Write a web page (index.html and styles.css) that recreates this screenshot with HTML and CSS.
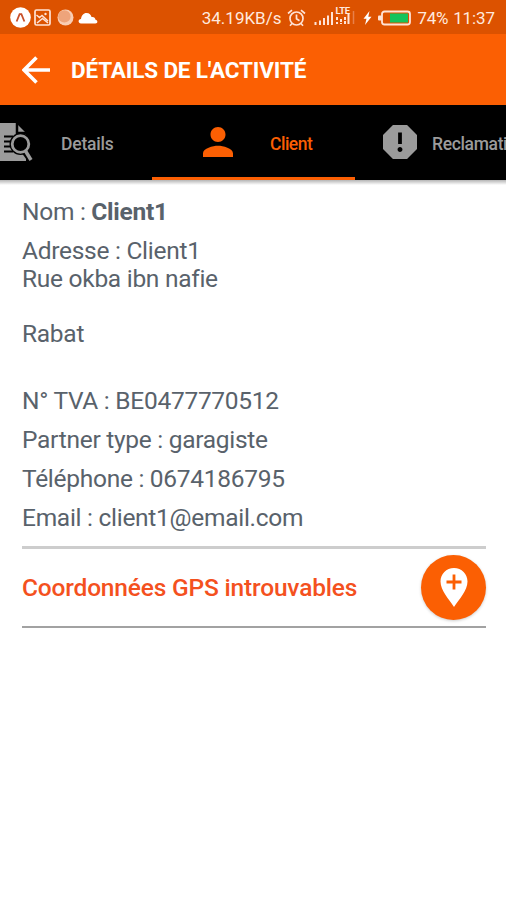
FILE: index.html
```html
<!DOCTYPE html>
<html lang="fr">
<head>
	<meta charset="UTF-8">
	<title>Détails de l'activité</title>
	<link rel="stylesheet" href="styles.css">
</head>
<body>
	<div class="status">
		<div class="notifs">
			<svg class="expo" width="21" height="21" viewBox="0 0 21 21">
				<circle cx="10.5" cy="10.5" r="10.3" fill="#fff"/>
				<path d="M6.6 14.5L9.6 7.2h1.8l3 7.3" fill="none" stroke="#c8502a" stroke-width="1.8"/>
			</svg>
			<svg class="photo" width="17" height="17" viewBox="0 0 17 17">
				<rect x="1" y="1" width="15" height="15" rx="1.5" fill="none" stroke="#ffe3d6" stroke-width="1.7"/>
				<path d="M2.500 6l3 2.500L8 6.500l6 5.500M3 14l5.500-4.500L14 14" fill="none" stroke="#ffe3d6" stroke-width="1.500"/>
				<circle cx="11.5" cy="5" r="1.2" fill="#ffe3d6"/>
			</svg>
			<svg class="moon" width="17" height="17" viewBox="0 0 17 17">
				<circle cx="8.5" cy="8.5" r="8" fill="#f9cdb3"/>
				<circle cx="7.4" cy="7.4" r="6.2" fill="#eea47b"/>
			</svg>
			<svg class="cloud" width="20" height="12" viewBox="0 0 20 12">
				<path d="M3 11.5C-.2 11.5-.2 7.200 3 7 3.500 3.500 5.500 1 8.500 1s4.500 1.700 5 4c2.500-.4 3.700.8 4 2.800 2.400.3 2.600 3.700-.2 3.700z" fill="#fff"/>
			</svg>
		</div>
		<div class="system">
			<span class="speed">34.19KB/s</span>
			<svg class="alarm" width="19" height="18" viewBox="0 0 19 18">
				<g fill="none" stroke="#ffe3d6" stroke-width="1.7">
					<circle cx="9.500" cy="9.500" r="6.500"/>
					<path d="M9.500 5.500v4.300l3 2M1 4.500l4-3.300M18 4.500l-4-3.300M5 14.500l-2 2.200M14 14.500l2 2.200"/>
				</g>
			</svg>
			<svg class="signal" width="19" height="14" viewBox="0 0 19 14">
				<path d="M1.500 14v-3M6 14v-4.500M10 14v-7M14 14v-9.500M18 14v-13" stroke="#ffe3d6" stroke-width="2"/>
			</svg>
			<div class="lte">
				<span class="lte-label">LTE</span>
				<svg width="20" height="20" viewBox="0 0 20 20">
					<path d="M2 12v3M6 14v3M2 17v2M6 18v1M10 12v3M10 16v3M13.500 9v10" stroke="#ffe3d6" stroke-width="2"/>
					<path d="M18.500 6v13" stroke="#e8804a" stroke-width="1.500"/>
				</svg>
			</div>
			<svg class="bolt" width="9" height="14" viewBox="0 0 9 14">
				<path d="M6.500 0L.5 7.800h3L2 14l6.500-8.300H5.300z" fill="#fff"/>
			</svg>
			<svg class="battery" width="34" height="16" viewBox="0 0 34 16">
				<rect x="1" y="5.500" width="4" height="5" rx="1" fill="#ffe3d6"/>
				<rect x="5" y="1.500" width="28" height="13" rx="2.500" fill="none" stroke="#ffe3d6" stroke-width="1.800"/>
				<rect x="13" y="3.500" width="18" height="9" fill="#14c35c"/>
			</svg>
			<span class="percent">74%</span>
			<span class="time">11:37</span>
		</div>
	</div>

	<div class="header">
		<svg class="back" width="29" height="28" viewBox="0 0 29 28">
			<path d="M28 14H2.500M14.500 1.500L2 14l12.500 12.500" fill="none" stroke="#fff" stroke-width="3.600"/>
		</svg>
		<h1 class="title">DÉTAILS DE L'ACTIVITÉ</h1>
	</div>

	<div class="tabs">
		<div class="tab tab-details">
			<svg width="33" height="40" viewBox="0 0 33 40">
				<path d="M0 1h16l10 10v28H0z" fill="#9b9b9b"/>
				<path d="M17 1v10h10" fill="none" stroke="#000" stroke-width="2.500"/>
				<path d="M4 14.500h9M4 19.500h7M4 24.500h7M4 29.500h9" stroke="#000" stroke-width="1.800"/>
				<circle cx="20.500" cy="22" r="11" fill="#000"/>
				<path d="M24 29l8 11" stroke="#000" stroke-width="6"/>
				<circle cx="20.500" cy="22" r="8.300" fill="none" stroke="#9b9b9b" stroke-width="2.800"/>
				<path d="M25.500 29l5.500 9" stroke="#9b9b9b" stroke-width="3.500"/>
			</svg>
			<span class="label">Details</span>
		</div>
		<div class="tab tab-client on">
			<svg width="30" height="30" viewBox="4 4 16 16">
				<path d="M12 12c2.210 0 4-1.790 4-4s-1.790-4-4-4-4 1.790-4 4 1.790 4 4 4zm0 2c-2.670 0-8 1.340-8 4v2h16v-2c0-2.660-5.330-4-8-4z" fill="#fb5f03"/>
			</svg>
			<span class="label">Client</span>
		</div>
		<div class="tab tab-reclam">
			<svg width="34" height="34" viewBox="3 3 18 18">
				<path d="M15.730 3H8.270L3 8.270v7.460L8.270 21h7.460L21 15.730V8.270L15.730 3zM12 17.300c-.72 0-1.300-.58-1.300-1.300 0-.72.58-1.300 1.300-1.300.72 0 1.300.58 1.300 1.300 0 .72-.58 1.300-1.300 1.300zm1-4.300h-2V7h2v6z" fill="#9b9b9b"/>
			</svg>
			<span class="label">Reclamati</span>
		</div>
	</div>

	<div class="content">
		<p class="row nom">Nom : <b>Client1</b></p>
		<p class="row adresse">Adresse : Client1<br>Rue okba ibn nafie<br><br>Rabat</p>
		<p class="row">N° TVA : BE0477770512</p>
		<p class="row">Partner type : garagiste</p>
		<p class="row">Téléphone : 0674186795</p>
		<p class="row email">Email : client1@email.com</p>
		<div class="gps">
			<span class="gps-text">Coordonnées GPS introuvables</span>
			<a href="#" class="pin">
				<svg width="28" height="39" viewBox="0 0 28 39">
					<path d="M14 0C6.300 0 .5 6 .5 13.500.5 22.500 9 31.500 14 39c5-7.500 13.500-16.500 13.500-25.500C27.500 6 21.700 0 14 0z" fill="#fff"/>
					<path d="M14 6.500v15M6.500 14h15" stroke="#fb5f03" stroke-width="2.800"/>
				</svg>
			</a>
		</div>
	</div>
</body>
</html>
```

FILE: styles.css
```css
* {margin:0; padding:0; box-sizing:border-box;}
body {
	width:506px;
	height:900px;
	overflow:hidden;
	background:#fff;
	font-family:Roboto, "Liberation Sans", sans-serif;
}
svg {
	display:block;
	flex:none;
}

/* status bar */
.status {
	display:flex;
	justify-content:space-between;
	height:34px;
	padding:0 11px 0 10px;
	background:#dc5200;
	color:#ffe9de;
	font-size:17px;
}
.notifs, .system {
	display:flex;
	align-items:center;
	height:35px;
}
.photo {margin-left:3px;}
.moon {margin-left:6px;}
.cloud {margin-left:4px;}
.system {white-space:nowrap;}
.alarm {margin-left:6px;}
.signal {margin:0 2px 0 8px;}
.lte {
	position:relative;
	margin-top:-5px;
}
.lte-label {
	position:absolute;
	left:0;
	top:1px;
	font-size:9.500px;
	line-height:10px;
	font-weight:bold;
	letter-spacing:-.3px;
}
.bolt {margin-left:8px;}
.battery {margin:0 6px 0 5px;}
.percent {letter-spacing:-.3px;}
.time {
	margin-left:5px;
	letter-spacing:-.1px;
}

/* title bar */
.header {
	display:flex;
	align-items:center;
	height:71px;
	padding-left:22px;
	background:#fb5f03;
}
.title {
	margin-left:20px;
	color:#fff;
	font-size:22.500px;
	line-height:28px;
	font-weight:bold;
	letter-spacing:-.15px;
	white-space:nowrap;
}

/* tabs */
.tabs {
	display:flex;
	height:75px;
	overflow:hidden;
	background:#000;
}
.tab {
	display:flex;
	flex:none;
	align-items:center;
	padding-top:2px;
	color:#9b9b9b;
	font-size:17.500px;
	font-weight:500;
	letter-spacing:-.2px;
	border-bottom:3px solid #000;
}
.label {margin-top:4px;}
.tab-details {width:152px;}
.tab-details .label {margin-left:28px;}
.tab-client {
	width:203px;
	padding-left:51px;
}
.tab-client .label {
	margin-left:37px;
	letter-spacing:-.5px;
}
.tab-reclam {
	width:151px;
	padding-left:28px;
}
.tab-reclam .label {
	margin-left:15px;
	letter-spacing:-.35px;
}
.tab.on {
	color:#fb5f03;
	border-bottom-color:#fb5f03;
}

/* client */
.content {
	padding:18px 20px 0 22px;
	color:#59626b;
	font-size:24.500px;
	line-height:27.500px;
	background:linear-gradient(#b5b5b5, #fff) no-repeat 0 0 / 100% 5px;
}
.row {
	margin-bottom:11.500px;
	letter-spacing:-.28px;
	white-space:nowrap;
}
.adresse {margin-bottom:40px;}
.email {margin-bottom:14px;}
.gps {
	display:flex;
	align-items:center;
	justify-content:space-between;
	height:82px;
	border-top:3px solid #cdcdcd;
	border-bottom:2px solid #a2a2a2;
}
.gps-text {
	margin-top:2px;
	color:#f4511e;
	font-weight:500;
	letter-spacing:-.18px;
}
.pin {
	display:flex;
	align-items:center;
	justify-content:center;
	width:65px;
	height:65px;
	border-radius:50%;
	background:#fb5f03;
	box-shadow:0 1px 3px #ccc;
}
```
